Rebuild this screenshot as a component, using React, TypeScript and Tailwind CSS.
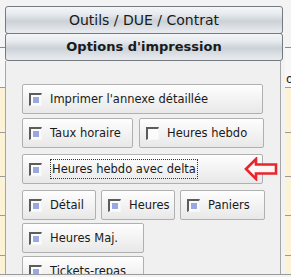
import React from "react";

const font = "font-['DejaVu_Sans','Liberation_Sans',sans-serif]";

const Check = ({ on }: { on: boolean }) => (
  <span className="flex h-[13px] w-[13px] shrink-0 items-center justify-center border-b border-l-2 border-r border-t-2 border-b-[#f6f6f6] border-l-[#5c5c5c] border-r-[#f6f6f6] border-t-[#5c5c5c] bg-[#fbfbfb]">
    {on && <span className="h-[6px] w-[6px] bg-[#9ba7e2]" />}
  </span>
);

type OptProps = {
  label: string;
  on?: boolean;
  w: string;
  focus?: boolean;
};

const Opt = ({ label, on = true, w, focus = false }: OptProps) => (
  <div
    className={`flex h-[30px] shrink-0 items-center gap-[8px] rounded-[2px] border border-[#b0b0b0] bg-[linear-gradient(to_bottom,#fefefe,#e8e8e8)] pl-[6px] ${w}`}
  >
    <Check on={on} />
    <span
      className={
        focus
          ? "border border-dotted border-[#333] px-px py-[1px] text-[11.5px] leading-[16px] text-[#1a1a1a]"
          : "text-[11.5px] leading-[16px] text-[#1a1a1a]"
      }
    >
      {label}
    </span>
  </div>
);

const Header = ({ label, bold }: { label: string; bold?: boolean }) => (
  <div
    className={`flex h-[28px] items-center justify-center rounded-[3px] border border-[#747a80] bg-[linear-gradient(to_bottom,#f4f6f8_0%,#e6eaee_28%,#cbd1d7_55%,#dde1e5_80%,#e9ecef_100%)] text-[#1a1a1a] ${
      bold ? "text-[13px] font-bold" : "text-[14px]"
    }`}
  >
    {label}
  </div>
);

const Arrow = () => (
  <svg
    className="absolute right-[-15px] top-[3px]"
    width="34"
    height="24"
    viewBox="0 0 34 24"
  >
    <polygon
      points="2,12 12,2 12,7.5 32,7.5 32,16.5 12,16.5 12,22"
      fill="#fff6f6"
      stroke="#e8252b"
      strokeWidth="2.6"
      strokeLinejoin="miter"
    />
  </svg>
);

const Side = ({ right }: { right?: boolean }) => (
  <div className="flex h-full flex-col">
    <div className="h-[48px] bg-[#f3f3f3]" />
    <div className="h-[42px] overflow-hidden border-t border-[#8a8a8a] bg-[#f7f7f7]">
      {right && (
        <span className="ml-[1px] mt-[24px] block text-[12px] leading-[14px] text-[#222]">
          or
        </span>
      )}
    </div>
    {[46, 45, 40, 41, 20].map((h, i) => (
      <div
        key={i}
        className="border-t border-[#9b9b9b] bg-[#fcf2d6]"
        style={{ height: h }}
      />
    ))}
  </div>
);

export default function App() {
  return (
    <div className={`h-[277px] w-[291px] overflow-hidden bg-[#f3f3f3] ${font}`}>
      <div className="flex h-[275px] border-b border-[#9a9a9a]">
        <div className="w-[5px] shrink-0">
          <Side />
        </div>
        <div className="flex w-[278px] shrink-0 flex-col pt-[6px]">
          <Header label="Outils / DUE / Contrat" />
          <div className="-mt-px">
            <Header label="Options d'impression" bold />
          </div>
          <div className="mr-[2px] flex flex-1 flex-col overflow-hidden border-l border-r border-[#a6a6a6] bg-[#f0f0f0] pl-[16px] pt-[23px]">
            <Opt label="Imprimer l'annexe détaillée" w="w-[241px]" />
            <div className="mt-[4px] flex gap-[6px]">
              <Opt label="Taux horaire" w="w-[111px]" />
              <Opt label="Heures hebdo" on={false} w="w-[125px]" />
            </div>
            <div className="relative mt-[6px] w-[241px]">
              <Opt label="Heures hebdo avec delta" w="w-[241px]" focus />
              <Arrow />
            </div>
            <div className="mt-[6px] flex gap-[5px]">
              <Opt label="Détail" w="w-[74px]" />
              <Opt label="Heures" w="w-[74px]" />
              <Opt label="Paniers" w="w-[85px]" />
            </div>
            <div className="mt-[3px]">
              <Opt label="Heures Maj." w="w-[122px]" />
            </div>
            <div className="mt-[3px]">
              <Opt label="Tickets-repas" w="w-[122px]" />
            </div>
          </div>
        </div>
        <div className="ml-[2px] w-[6px] shrink-0 overflow-hidden">
          <Side right />
        </div>
      </div>
    </div>
  );
}
